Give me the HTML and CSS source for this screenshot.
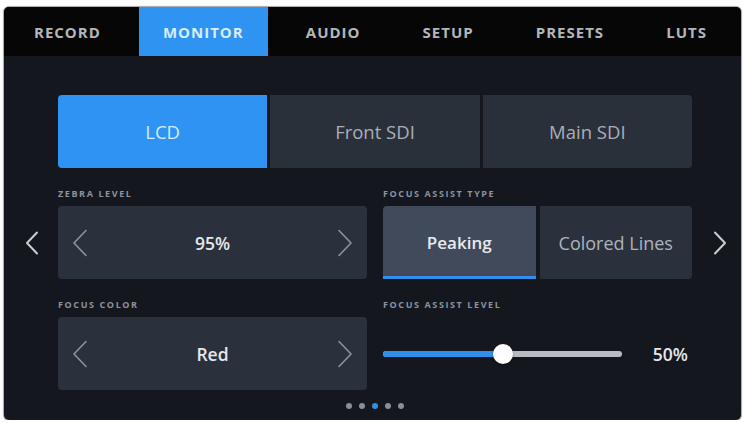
FILE: index.html
```html
<!DOCTYPE html>
<html lang="en">
<head>
<meta charset="utf-8">
<title>Monitor</title>
<link rel="stylesheet" href="styles.css">
</head>
<body>
<div class="screen">
  <nav class="tabs">
    <div class="tab">RECORD</div>
    <div class="tab active">MONITOR</div>
    <div class="tab">AUDIO</div>
    <div class="tab">SETUP</div>
    <div class="tab">PRESETS</div>
    <div class="tab">LUTS</div>
  </nav>
  <main class="content">
    <div class="seg-row">
      <div class="seg active">LCD</div>
      <div class="seg">Front SDI</div>
      <div class="seg">Main SDI</div>
    </div>

    <div class="row">
      <div class="side side-left">
        <svg class="nav-chev" viewBox="0 0 14 24" width="14" height="24"><polyline points="12,1.5 2,12 12,22.5"/></svg>
      </div>
      <div class="field">
        <div class="label">ZEBRA LEVEL</div>
        <div class="box stepper">
          <svg class="chev" viewBox="0 0 16 28" width="16" height="28"><polyline points="14,1.5 2,14 14,26.5"/></svg>
          <span class="value">95%</span>
          <svg class="chev" viewBox="0 0 16 28" width="16" height="28"><polyline points="2,1.5 14,14 2,26.5"/></svg>
        </div>
      </div>
      <div class="field">
        <div class="label">FOCUS ASSIST TYPE</div>
        <div class="toggle">
          <div class="opt selected">Peaking</div>
          <div class="opt">Colored Lines</div>
        </div>
      </div>
      <div class="side side-right">
        <svg class="nav-chev" viewBox="0 0 14 24" width="14" height="24"><polyline points="2,1.5 12,12 2,22.5"/></svg>
      </div>
    </div>

    <div class="row">
      <div class="side side-left"></div>
      <div class="field">
        <div class="label">FOCUS COLOR</div>
        <div class="box stepper">
          <svg class="chev" viewBox="0 0 16 28" width="16" height="28"><polyline points="14,1.5 2,14 14,26.5"/></svg>
          <span class="value">Red</span>
          <svg class="chev" viewBox="0 0 16 28" width="16" height="28"><polyline points="2,1.5 14,14 2,26.5"/></svg>
        </div>
      </div>
      <div class="field">
        <div class="label">FOCUS ASSIST LEVEL</div>
        <div class="slider-row">
          <div class="track">
            <div class="fill" style="width: 50%"></div>
            <div class="knob" style="left: 50%"></div>
          </div>
          <span class="slider-value">50%</span>
        </div>
      </div>
      <div class="side side-right"></div>
    </div>

    <div class="dots">
      <span class="dot"></span>
      <span class="dot"></span>
      <span class="dot on"></span>
      <span class="dot"></span>
      <span class="dot"></span>
    </div>
  </main>
</div>
</body>
</html>
```

FILE: styles.css
```css
* { box-sizing: border-box; }

html, body {
  margin: 0;
  padding: 0;
  background: #ffffff;
}

body {
  font-family: "Open Sans", "Liberation Sans", sans-serif;
  padding: 7px 0 0 4px;
}

.screen {
  width: 737px;
  height: 413px;
  background: #14171e;
  border-radius: 5px;
  overflow: hidden;
  box-shadow: 0 0 1px 1px rgba(0, 0, 0, 0.35);
  display: flex;
  flex-direction: column;
}

.tabs {
  height: 49px;
  background: #060607;
  display: flex;
  justify-content: space-between;
  padding: 0 10px 0 6px;
}

.tab {
  display: flex;
  align-items: center;
  padding: 1px 24px 0;
  font-size: 15px;
  font-weight: 700;
  letter-spacing: 1px;
  color: #b3b6ba;
}

.tab.active {
  background: #2f93f2;
  color: #d9edfd;
}

.content {
  flex: 1;
  padding-top: 39px;
  display: flex;
  flex-direction: column;
}

.seg-row {
  margin: 0 49px 0 54px;
  height: 73px;
  display: flex;
  gap: 3px;
}

.seg {
  flex: 1;
  background: #2a303a;
  display: flex;
  align-items: center;
  justify-content: center;
  font-size: 18.5px;
  color: #a8afb9;
}

.seg:first-child { border-radius: 4px 0 0 4px; }
.seg:last-child { border-radius: 0 4px 4px 0; }

.seg.active {
  background: #2f93f3;
  color: #d4ebfd;
}

.row {
  margin-top: 21px;
  display: flex;
  align-items: flex-end;
}

.side {
  height: 73px;
  display: flex;
  align-items: center;
}

.side-left {
  width: 54px;
  padding-left: 21px;
}

.side-right {
  width: 49px;
  padding-left: 21px;
}

.side-left + .field + .field { margin-left: 16px; }

.field {
  width: 309px;
  display: flex;
  flex-direction: column;
}

.label {
  height: 10px;
  line-height: 10px;
  margin-bottom: 7px;
  font-size: 9px;
  font-weight: 700;
  letter-spacing: 1.6px;
  color: #8c939d;
}

.nav-chev polyline {
  fill: none;
  stroke: #c9ccd1;
  stroke-width: 2;
  stroke-linecap: round;
  stroke-linejoin: round;
}

.box {
  height: 73px;
  background: #2b313c;
  border-radius: 4px;
}

.stepper {
  display: flex;
  align-items: center;
  justify-content: space-between;
  padding: 0 14px;
}

.chev polyline {
  fill: none;
  stroke: #8b93a1;
  stroke-width: 1.6;
  stroke-linecap: round;
  stroke-linejoin: round;
}

.value {
  font-size: 17.5px;
  font-weight: 600;
  color: #e4e7eb;
}

.toggle {
  height: 73px;
  display: flex;
  gap: 4px;
}

.opt {
  flex: 1;
  background: #2b313c;
  border-radius: 0 4px 4px 0;
  display: flex;
  align-items: center;
  justify-content: center;
  font-size: 18px;
  color: #adb3bc;
}

.opt.selected {
  background: #414a5b;
  border-radius: 4px 0 0 0;
  border-bottom: 3px solid #2f8fea;
  padding-top: 3px;
  color: #e8ebef;
  font-size: 17px;
  font-weight: 600;
}

.slider-row {
  height: 73px;
  display: flex;
  align-items: center;
  padding-right: 4px;
}

.track {
  position: relative;
  width: 239px;
  height: 6px;
  border-radius: 3px;
  background: #b8bbc1;
}

.fill {
  height: 6px;
  border-radius: 3px;
  background: #2f8fea;
}

.knob {
  position: absolute;
  top: 50%;
  width: 20px;
  height: 20px;
  margin: -10px 0 0 -10px;
  border-radius: 50%;
  background: #ffffff;
  box-shadow: 0 1px 2px rgba(0, 0, 0, 0.4);
}

.slider-value {
  margin-left: auto;
  font-size: 17.5px;
  font-weight: 600;
  color: #e4e7eb;
}

.dots {
  margin: 13px 49px 0 54px;
  display: flex;
  justify-content: center;
  gap: 7px;
}

.dot {
  width: 6px;
  height: 6px;
  border-radius: 50%;
  background: #8a8f97;
}

.dot.on { background: #2f8fea; }
```
